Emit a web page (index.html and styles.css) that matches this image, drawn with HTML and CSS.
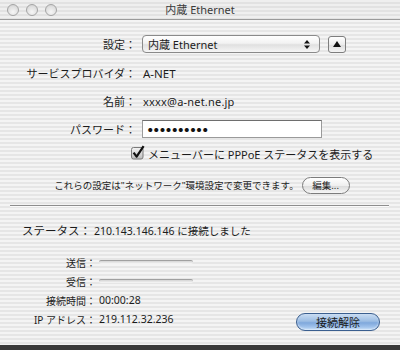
FILE: index.html
```html
<!DOCTYPE html>
<html lang="ja">
<head>
<meta charset="utf-8">
<title>内蔵 Ethernet</title>
<link rel="stylesheet" href="styles.css">
</head>
<body>
<div class="window">
  <div class="titlebar">
    <div class="lights"><span class="light"></span><span class="light"></span><span class="light"></span></div>
    <div class="title">内蔵 Ethernet</div>
    <div></div>
  </div>
  <div class="content">
    <div class="row r-config">
      <span class="lbl">設定：</span>
      <div class="popup">
        <span class="popup-text">内蔵 Ethernet</span>
        <svg class="stepper" width="6" height="9" viewBox="0 0 6 9"><path d="M3 0 L6 3.5 L0 3.5 Z M0 5.5 L6 5.5 L3 9 Z" fill="#111"/></svg>
      </div>
      <button class="tri"><svg width="8" height="6" viewBox="0 0 8 6"><path d="M4 0 L8 6 L0 6 Z" fill="#111"/></svg></button>
    </div>
    <div class="row r-isp">
      <span class="lbl">サービスプロバイダ：</span>
      <span class="val">A-NET</span>
    </div>
    <div class="row r-name">
      <span class="lbl">名前：</span>
      <span class="val small">xxxx@a-net.ne.jp</span>
    </div>
    <div class="row r-pass">
      <span class="lbl">パスワード：</span>
      <div class="field">●●●●●●●●●●</div>
    </div>
    <div class="row r-check">
      <svg class="checkbox" width="15" height="15" viewBox="0 0 15 15">
        <defs><linearGradient id="cb" x1="0" y1="0" x2="0" y2="1"><stop offset="0" stop-color="#f4f4f4"/><stop offset="1" stop-color="#bdbdbd"/></linearGradient></defs>
        <rect x="0.5" y="2.5" width="11.5" height="11.5" rx="2" fill="url(#cb)" stroke="#7a7a7a"/>
        <path d="M2.6 7.6 L5.6 11.6 L12.6 1.2" fill="none" stroke="#111" stroke-width="2.2" stroke-linejoin="round"/>
      </svg>
      <span class="check-text">メニューバーに PPPoE ステータスを表示する</span>
    </div>
    <div class="note">
      <span>これらの設定は"ネットワーク"環境設定で変更できます。</span>
      <button class="edit">編集...</button>
    </div>
    <div class="sep"></div>
    <div class="status">
      <span class="status-lbl">ステータス：</span>
      <span class="status-val">210.143.146.146 に接続しました</span>
    </div>
    <div class="lower">
      <div class="stats">
        <span class="slbl">送信：</span><div class="bar"></div>
        <span class="slbl">受信：</span><div class="bar"></div>
        <span class="slbl">接続時間：</span><span class="sval">00:00:28</span>
        <span class="slbl">IP アドレス：</span><span class="sval">219.112.32.236</span>
      </div>
      <button class="disconnect">接続解除</button>
    </div>
  </div>
</div>
</body>
</html>
```

FILE: styles.css
```css
* { box-sizing: border-box; }
html, body { margin: 0; padding: 0; }
body {
  width: 400px;
  height: 350px;
  overflow: hidden;
  background: #3a3a3a;
  font-family: "Noto Sans", "Noto Sans CJK JP", sans-serif;
  color: #1c1c1c;
}
.window {
  width: 400px;
  height: 345px;
  background: repeating-linear-gradient(to bottom, #f4f4f4 0 2px, #e6e6e6 2px 4px);
  overflow: hidden;
}
.titlebar {
  height: 20px;
  display: grid;
  grid-template-columns: 1fr auto 1fr;
  align-items: center;
  border-bottom: 1px solid #9a9a9a;
  background: repeating-linear-gradient(to bottom, #efefef 0 2px, #e2e2e2 2px 4px);
}
.lights { display: flex; gap: 7px; padding-left: 7px; }
.light {
  width: 12px; height: 12px; border-radius: 50%;
  background: radial-gradient(circle at 50% 70%, #f6f6f6 0, #e0e0e0 60%, #cacaca 100%);
  border: 1px solid #a4a4a4;
}
.title { font-size: 11px; color: #3a3a3a; line-height: 20px; }

.content { display: flex; flex-direction: column; }
.row { display: flex; align-items: center; height: 18px; }
.lbl {
  width: 136px;
  text-align: right;
  font-size: 11px;
  flex: none;
}
.val { margin-left: 7px; font-size: 11.5px; }
.val.small { font-size: 11px; letter-spacing: 0.2px; }
.r-config { margin-top: 15px; }
.r-isp { margin-top: 11px; }
.r-name { margin-top: 10px; }
.r-pass { margin-top: 10px; }
.r-check { margin-top: 7px; padding-left: 131px; }

.popup {
  margin-left: 6px;
  width: 178px;
  height: 18px;
  border: 1px solid #8a8a8a;
  border-radius: 4px;
  background: linear-gradient(to bottom, #ffffff 0%, #f2f2f2 45%, #e0e0e0 55%, #f6f6f6 100%);
  display: flex;
  align-items: center;
  justify-content: space-between;
  padding: 0 9px 0 5px;
  font-size: 11px;
}
.stepper { display: block; }
.tri {
  margin-left: 8px;
  width: 18px;
  height: 17px;
  border: 1px solid #7e7e7e;
  border-radius: 3px;
  background: linear-gradient(to bottom, #ffffff 0%, #ececec 50%, #dcdcdc 51%, #f4f4f4 100%);
  padding: 0;
  display: flex;
  align-items: center;
  justify-content: center;
}
.field {
  margin-left: 6px;
  width: 180px;
  height: 18px;
  background: #fff;
  border: 1px solid #9a9a9a;
  border-top-color: #6e6e6e;
  font-family: "Noto Sans CJK JP", sans-serif;
  font-size: 4.5px;
  letter-spacing: 1.6px;
  padding-left: 5px;
  display: flex;
  align-items: center;
  color: #111;
}
.checkbox { display: block; margin-top: -3px; }
.check-text { margin-left: 2px; font-size: 11px; }

.note {
  margin-top: 13px;
  height: 18px;
  display: flex;
  align-items: center;
  justify-content: center;
  gap: 3px;
  font-size: 9.5px;
  padding-left: 4px;
}
.edit {
  width: 48px;
  height: 17px;
  border: 1px solid #7c7c7c;
  border-radius: 9px;
  background: linear-gradient(to bottom, #ffffff 0%, #efefef 50%, #dadada 52%, #f6f6f6 100%);
  font-family: inherit;
  font-size: 9.5px;
  color: #222;
  padding: 0;
}
.sep {
  margin: 11px 11px 0 10px;
  height: 2px;
  border-top: 1px solid #8e8e8e;
  border-bottom: 1px solid #fbfbfb;
}
.status {
  margin-top: 14px;
  height: 18px;
  display: flex;
  align-items: center;
  padding-left: 22px;
}
.status-lbl { font-size: 11.5px; }
.status-val { margin-left: 3px; font-size: 10.5px; }

.lower {
  margin-top: 15px;
  display: flex;
  padding-right: 20px;
}
.stats {
  display: grid;
  grid-template-columns: 96px 94px;
  grid-auto-rows: 16px;
  row-gap: 3px;
  column-gap: 3px;
  align-items: center;
  font-size: 10px;
}
.slbl { text-align: right; }
.sval { font-size: 10.5px; }
.bar {
  height: 4px;
  border-top: 1px solid #a0a0a0;
  border-radius: 2px;
  background: linear-gradient(to bottom, #d4d4d4, #f8f8f8);
}
.disconnect {
  margin-left: auto;
  align-self: flex-end;
  margin-bottom: -4px;
  width: 84px;
  height: 18px;
  border: 1px solid #3b5f8f;
  border-radius: 9px;
  background: linear-gradient(to bottom, #c9dcf2 0%, #9cbde3 45%, #7fa8dc 55%, #b9d6f6 100%);
  box-shadow: inset 0 -1px 2px rgba(255,255,255,0.6);
  font-family: inherit;
  font-size: 11px;
  color: #1a1a1a;
  padding: 0;
}
```
